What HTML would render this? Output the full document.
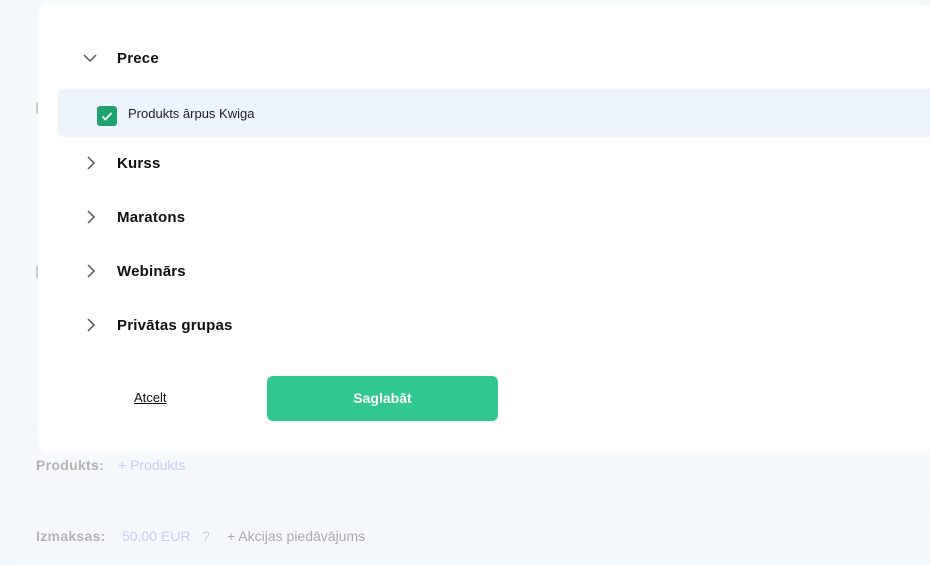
<!DOCTYPE html>
<html><head><style>
body{margin:0;width:930px;height:544px;background:#f3f7fb;font-family:"Liberation Sans",sans-serif;position:relative;overflow:hidden}
.bgcard{position:absolute;left:16px;right:0;background:#f5f9fc;border-radius:10px}
.modal{position:absolute;left:38px;top:5px;width:900px;height:446px;background:#fff;border-radius:12px}
.row{position:absolute;left:0;width:400px;height:20px;font-size:15px;font-weight:bold;color:#111;white-space:nowrap;letter-spacing:0.2px}
.chev{position:absolute;left:45px;top:3px}
.lbl{position:absolute;left:79px;top:2px}
.sel{position:absolute;left:20px;top:84px;width:880px;height:48px;background:#eef4fd;border-radius:6px}
.cb{position:absolute;left:39px;top:17px;width:20px;height:20px;background:#1fa26e;border-radius:3px}
</style></head><body>
<div class="bgcard" style="top:0;height:425px"></div>
<div class="bgcard" style="top:433px;height:62px"></div>
<div class="bgcard" style="top:505px;height:60px"></div>
<div style="position:absolute;left:36px;top:102px;width:2px;height:12px;background:#ccc"></div>
<div style="position:absolute;left:36px;top:266px;width:2px;height:12px;background:#ccc"></div>
<div style="position:absolute;left:36px;top:457px;font-size:14px;font-weight:bold;color:#b3b3b3;letter-spacing:0.3px">Produkts:</div>
<div style="position:absolute;left:118px;top:457px;font-size:14px;color:#c2ccf5">+ Produkts</div>
<div style="position:absolute;left:36px;top:528px;font-size:14px;font-weight:bold;color:#b3b3b3;letter-spacing:0.3px">Izmaksas:</div>
<div style="position:absolute;left:122px;top:528px;font-size:14px;color:#c2ccf5">50.00 EUR &nbsp;&nbsp;?</div>
<div style="position:absolute;left:227px;top:528px;font-size:14px;color:#aaa">+ Akcijas piedāvājums</div>
<div class="modal">
  <div class="row" style="top:43px"><svg class="chev" width="14" height="14" viewBox="0 0 14 14"><path d="M1 4l6 6 6-6" fill="none" stroke="#555" stroke-width="1.5"/></svg><span class="lbl">Prece</span></div>
  <div class="sel"><div class="cb"><svg width="20" height="20" viewBox="0 0 20 20"><path d="M5.5 10.5l3 3 6-6.5" fill="none" stroke="#fff" stroke-width="1.8"/></svg></div><span style="position:absolute;left:70px;top:17px;font-size:13px;color:#222">Produkts ārpus Kwiga</span></div>
  <div class="row" style="top:148px"><svg class="chev" width="14" height="14" viewBox="0 0 14 14"><path d="M5 1l6 6-6 6" fill="none" stroke="#555" stroke-width="1.5"/></svg><span class="lbl">Kurss</span></div>
  <div class="row" style="top:202px"><svg class="chev" width="14" height="14" viewBox="0 0 14 14"><path d="M5 1l6 6-6 6" fill="none" stroke="#555" stroke-width="1.5"/></svg><span class="lbl">Maratons</span></div>
  <div class="row" style="top:256px"><svg class="chev" width="14" height="14" viewBox="0 0 14 14"><path d="M5 1l6 6-6 6" fill="none" stroke="#555" stroke-width="1.5"/></svg><span class="lbl">Webinārs</span></div>
  <div class="row" style="top:310px"><svg class="chev" width="14" height="14" viewBox="0 0 14 14"><path d="M5 1l6 6-6 6" fill="none" stroke="#555" stroke-width="1.5"/></svg><span class="lbl">Privātas grupas</span></div>
  <div style="position:absolute;left:96px;top:385px;font-size:13px;color:#111;text-decoration:underline">Atcelt</div>
  <div style="position:absolute;left:229px;top:371px;width:231px;height:45px;background:#31c78e;border-radius:6px;color:#fff;font-size:14px;font-weight:bold;text-align:center;line-height:44px">Saglabāt</div>
</div>
</body></html>
